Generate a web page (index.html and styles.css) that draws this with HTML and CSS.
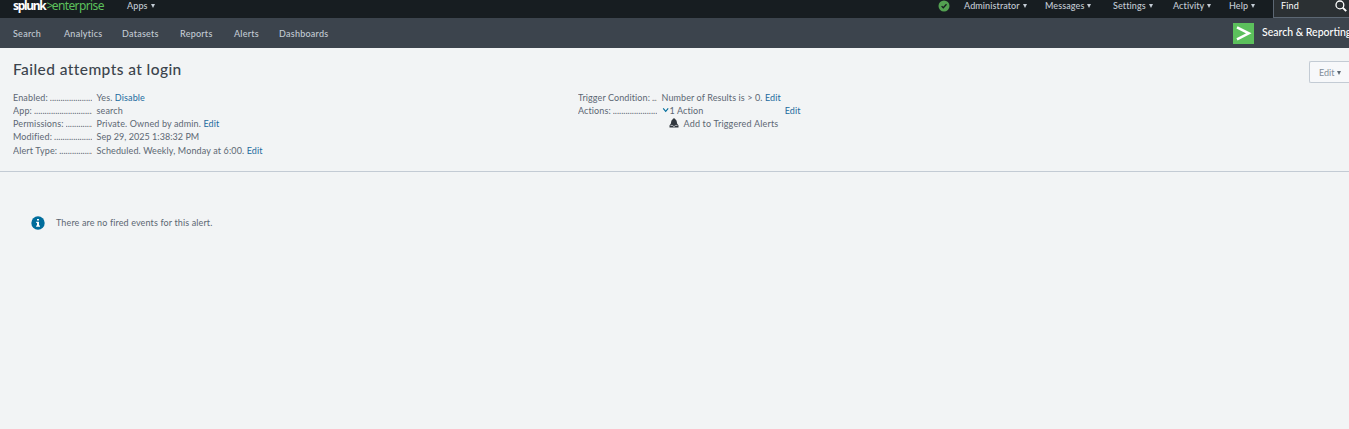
FILE: index.html
```
<!DOCTYPE html>
<html lang="en">
<head>
<meta charset="utf-8">
<title>Failed attempts at login</title>
<link rel="stylesheet" href="styles.css">
</head>
<body>
<header class="topbar">
  <div class="logo"><span class="logo-brand">splunk</span><span class="logo-edition"><span class="logo-mark">&gt;</span>enterprise</span></div>
  <a class="menu menu-apps">Apps<i class="caret"></i></a>
  <div class="topbar-right">
    <svg class="health" viewBox="0 0 12 12"><circle cx="6" cy="6" r="5.5" fill="#53a051"/><path d="M3.600 6.100l1.700 1.700 3.200-3.500" fill="none" stroke="#171d21" stroke-width="1.3"/></svg>
    <a class="menu menu-admin">Administrator<i class="caret"></i></a>
    <a class="menu menu-messages">Messages<i class="caret"></i></a>
    <a class="menu menu-settings">Settings<i class="caret"></i></a>
    <a class="menu menu-activity">Activity<i class="caret"></i></a>
    <a class="menu menu-help">Help<i class="caret"></i></a>
    <div class="find"><span>Find</span><svg class="find-icon" viewBox="0 0 12 12"><circle cx="4.9" cy="4.9" r="3.9" fill="none" stroke="#fff" stroke-width="1.3"/><path d="M7.7 7.7l3.5 3.5" stroke="#fff" stroke-width="1.9"/></svg></div>
  </div>
</header>
<nav class="appbar">
  <a class="tab tab-search">Search</a>
  <a class="tab tab-analytics">Analytics</a>
  <a class="tab tab-datasets">Datasets</a>
  <a class="tab tab-reports">Reports</a>
  <a class="tab tab-alerts">Alerts</a>
  <a class="tab">Dashboards</a>
  <div class="app">
    <svg class="app-icon" viewBox="0 0 21 21"><rect width="21" height="21" fill="#5cc05c"/><path d="M4 4.300L15.800 10.300L4 16.300" fill="none" stroke="#fff" stroke-width="2.500"/></svg>
    <span class="app-name">Search &amp; Reporting</span>
  </div>
</nav>
<main>
  <section class="summary">
    <div class="heading">
      <h1>Failed attempts at login</h1>
      <button class="edit">Edit<i class="caret"></i></button>
    </div>
    <div class="details">
      <dl class="props">
        <dt>Enabled:</dt><dd>Yes. <a>Disable</a></dd>
        <dt>App:</dt><dd>search</dd>
        <dt>Permissions:</dt><dd>Private. Owned by admin. <a>Edit</a></dd>
        <dt>Modified:</dt><dd class="date">Sep 29, 2025 1:38:32 PM</dd>
        <dt>Alert Type:</dt><dd>Scheduled. Weekly, Monday at 6:00. <a>Edit</a></dd>
      </dl>
      <dl class="props props-trigger">
        <dt>Trigger Condition:</dt><dd>Number of Results is &gt; 0. <a>Edit</a></dd>
        <dt>Actions:</dt>
        <dd class="actions">
          <div class="action-row"><svg class="chevron" viewBox="0 0 8 6"><path d="M1.200 1.300l2.500 3L6.200 1.300" fill="none" stroke="#006d9c" stroke-width="1.1"/></svg><span>1 Action</span><a class="action-edit">Edit</a></div>
          <div class="action-item"><svg class="bell" viewBox="0 0 10 10"><path d="M5 .2C6 .2 6.200 1 6.200 1.300C7.800 2 7.800 4 8.100 5.400L9.500 7.600V9.500H.5V7.600L1.900 5.400C2.200 4 2.200 2 3.800 1.300C3.800 1 4 .2 5 .2Z" fill="#31373e"/><path d="M1.500 7.400H3.400C4 8.700 6 8.700 6.600 7.400H8.500" fill="none" stroke="#d5d8dc" stroke-width=".8"/></svg><span>Add to Triggered Alerts</span></div>
        </dd>
      </dl>
    </div>
  </section>
  <div class="notice">
    <svg class="info" viewBox="0 0 14 14"><circle cx="7" cy="7" r="6.700" fill="#006d9c"/><path d="M6 2.900h2v1.700H6zM5.200 5.700H8V9.500H9V10.800H5.100V9.500H6V7H5.200z" fill="#fff"/></svg>
    <span class="notice-text">There are no fired events for this alert.</span>
  </div>
</main>
</body>
</html>
```
FILE: styles.css
```
* { box-sizing: border-box; }
body { margin: 0; height: 429px; overflow: hidden; background: #f2f4f5; color: #5c6773; font: 9px/13px Lato, "Open Sans", sans-serif; letter-spacing: .13px; }
a { color: #1c6b9e; }
.caret { display: inline-block; margin-left: 3px; border: 0 solid transparent; border-width: 4px 2.500px 0; border-top-color: currentColor; vertical-align: 1px; }

.topbar { display: flex; height: 18px; padding-left: 13px; background: #171d21; white-space: nowrap; }
.logo { width: 114px; font: 12px/12px "Noto Sans", sans-serif; letter-spacing: -.62px; }
.logo-brand { color: #fff; font-weight: 700; letter-spacing: -1.300px; }
.logo-edition { color: #5cc05c; }
.logo-mark { margin-left: 1px; letter-spacing: -1.500px; }
.menu { line-height: 11px; color: #c3cbd4; font-weight: 500; letter-spacing: .1px; }
.topbar-right { display: flex; margin-left: auto; }
.health { width: 12px; height: 12px; margin-right: 14px; }
.menu-admin { width: 81px; }
.menu-messages { width: 68px; }
.menu-settings { width: 60px; }
.menu-activity { width: 56px; }
.menu-help { width: 44px; }
.find { display: flex; width: 76px; padding: 0 2px 0 7px; justify-content: space-between; background: #2b3033; border: solid #5c6773; border-width: 0 0 1px 1px; color: #fff; line-height: 12px; }
.find-icon { width: 12px; height: 12px; }

.appbar { display: flex; align-items: center; height: 30px; padding-left: 13px; background: #3c444d; white-space: nowrap; }
.tab { color: #c3cbd4; font-weight: 500; letter-spacing: .25px; }
.tab-search { width: 51px; }
.tab-analytics { width: 58px; }
.tab-datasets { width: 58px; }
.tab-reports { width: 54px; }
.tab-alerts { width: 45px; }
.app { display: flex; align-items: center; width: 116px; margin-left: auto; }
.app-icon { flex: none; width: 21px; height: 21px; }
.app-name { margin-left: 8px; padding-bottom: 1px; color: #fff; font-size: 10.500px; font-weight: 500; letter-spacing: 0; }

.summary { height: 124px; border-bottom: 1px solid #c3cbd4; }
.heading { display: flex; justify-content: space-between; height: 42.500px; padding-left: 13px; }
h1 { margin: 11px 0 0; font-size: 15.500px; line-height: 20px; font-weight: 500; letter-spacing: .42px; color: #3c444d; }
.edit { width: 40px; height: 22px; margin-top: 13px; padding: 0 0 0 9px; border: 1px solid #c3cbd4; border-right: 0; border-radius: 2px 0 0 2px; background: #f7f8fa; color: #818d99; font: inherit; text-align: left; }
.edit .caret { color: #5c6773; }
.details { display: grid; grid-template-columns: 565px 1fr; padding-left: 13px; }
.props { display: grid; grid-template-columns: 79px 1fr; column-gap: 4.500px; grid-auto-rows: 13.250px; align-content: start; margin: 0; white-space: nowrap; }
.props-trigger { letter-spacing: .1px; }
dt { display: flex; gap: 2px; overflow: hidden; }
dt::after { content: "................................................"; flex: 1; overflow: hidden; letter-spacing: 0; }
dd { margin: 0; }
.date { letter-spacing: .05px; }
.action-row { display: flex; align-items: center; height: 13px; width: 139px; }
.chevron { width: 8px; height: 6px; }
.action-edit { margin-left: auto; }
.action-item { display: flex; align-items: center; height: 13px; padding-left: 7px; letter-spacing: .18px; }
.bell { width: 10px; height: 10px; margin-right: 5px; }
.notice { display: flex; align-items: center; gap: 11px; padding: 44px 0 0 31px; }
.notice-text { padding-bottom: 1px; }
.info { width: 14px; height: 14px; }
```
